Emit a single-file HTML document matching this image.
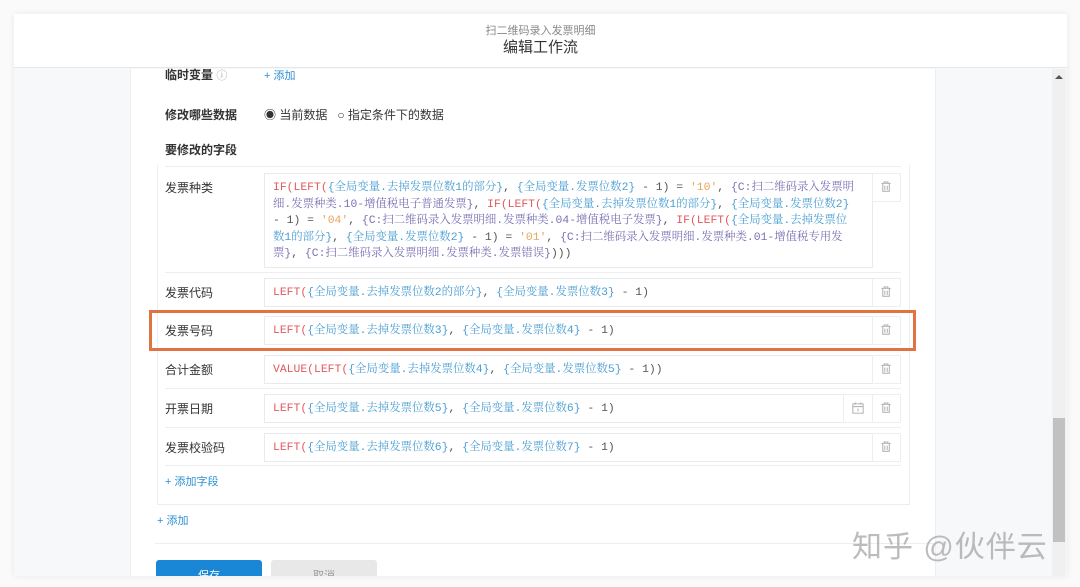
<!DOCTYPE html>
<html><head><meta charset="utf-8"><style>
*{margin:0;padding:0;box-sizing:border-box}
body{width:1080px;height:587px;background:#fafafa;overflow:hidden;position:relative;font-family:"Liberation Sans","Noto Sans CJK SC",sans-serif;color:#333}
.modal{position:absolute;left:14px;top:14px;width:1053px;height:562px;background:#f7f8fa;box-shadow:0 0 6px rgba(0,0,0,.08);overflow:hidden}
.hdr{position:absolute;left:0;top:0;width:1053px;height:54px;background:#fff;border-bottom:1px solid #e4e6ea;text-align:center}
.hdr .s{font-size:11px;color:#888;margin-top:10px;line-height:14px}
.hdr .t{font-size:15px;color:#333;margin-top:0px;line-height:20px}
.main{position:absolute;left:116px;top:55px;width:806px;height:520px;background:#fff;border-left:1px solid #eceef2;border-right:1px solid #eceef2}
.sb{position:absolute;left:1038px;top:55px;width:14px;height:510px;background:#f0f0f0}
.sb .th{position:absolute;left:1px;top:349px;width:12px;height:124px;background:#c1c1c1}
.sb .ar{position:absolute;left:3px;top:6px;width:0;height:0;border-left:4px solid transparent;border-right:4px solid transparent;border-bottom:4px solid #555}
.a{position:absolute;font-size:12px}
.b{font-weight:bold;color:#333}
.blue{color:#2d8fd6}
.card{position:absolute;left:157px;top:165px;width:753px;height:340px;border:1px solid #eceef2;border-top:none}
.row{position:absolute;left:165px;width:736px;border-top:1px solid #eceef2}
.lab{position:absolute;left:0;font-size:12px;color:#333}
.inp{position:absolute;left:99px;border:1px solid #e8eaee;background:#fff;font-family:"Liberation Mono","Noto Serif CJK SC",monospace;font-size:11.4px;line-height:16.6px;padding:6px 8px;color:#555;white-space:pre;overflow:hidden}
.tr{position:absolute;right:0;width:29px;height:29px;border:1px solid #eceef2;background:#fff}
.f{color:#e05a5f}.v{color:#4c9fd3}.c{color:#7b72b4}.s{color:#e9a55c}
</style></head><body>
<div class="modal">
 <div class="hdr"><div class="s">扫二维码录入发票明细</div><div class="t">编辑工作流</div></div>
 <div class="main"></div>
 <div class="sb"><div class="ar"></div><div class="th"></div></div>
</div>
<svg width="0" height="0" style="position:absolute"><defs><g id="tr"><path d="M9 10h10M12 10v-1.5h4V10M10.5 10.5v8h7v-8M12.7 12.5v4.5M15.3 12.5v4.5" fill="none" stroke="#aaa" stroke-width="1"/></g></defs></svg>
<div class="a b" style="left:165px;top:66px">临时变量 <span style="font-weight:normal;color:#aaa;font-size:11px">ⓘ</span></div>
<div class="a blue" style="left:264px;top:67px;font-size:11px">+ 添加</div>
<div class="a b" style="left:165px;top:106px">修改哪些数据</div>
<div class="a" style="left:264px;top:106px;font-size:12px">◉ 当前数据 &nbsp; ○ 指定条件下的数据</div>
<div class="a b" style="left:165px;top:141px">要修改的字段</div>
<div class="card"></div>

<div class="row" style="top:166px;height:106px"><div class="lab" style="top:12px">发票种类</div>
<div class="inp" style="top:6px;width:609px;height:95px"><span class="f">IF(LEFT(</span><span class="v">{全局变量.去掉发票位数1的部分}</span>, <span class="v">{全局变量.发票位数2}</span> - 1) = <span class="s">'10'</span>, <span class="c">{C:扫二维码录入发票明</span>
<span class="c">细.发票种类.10-增值税电子普通发票}</span>, <span class="f">IF(LEFT(</span><span class="v">{全局变量.去掉发票位数1的部分}</span>, <span class="v">{全局变量.发票位数2}</span>
- 1) = <span class="s">'04'</span>, <span class="c">{C:扫二维码录入发票明细.发票种类.04-增值税电子发票}</span>, <span class="f">IF(LEFT(</span><span class="v">{全局变量.去掉发票位</span>
<span class="v">数1的部分}</span>, <span class="v">{全局变量.发票位数2}</span> - 1) = <span class="s">'01'</span>, <span class="c">{C:扫二维码录入发票明细.发票种类.01-增值税专用发</span>
<span class="c">票}</span>, <span class="c">{C:扫二维码录入发票明细.发票种类.发票错误}</span>)))</div>
<svg class="tr" style="top:6px" viewBox="0 0 29 29"><use href="#tr"/></svg></div>

<div class="row" style="top:272px;height:38px"><div class="lab" style="top:11px">发票代码</div>
<div class="inp" style="top:5px;width:609px;height:29px"><span class="f">LEFT(</span><span class="v">{全局变量.去掉发票位数2的部分}</span>, <span class="v">{全局变量.发票位数3}</span> - 1)</div>
<svg class="tr" style="top:5px" viewBox="0 0 29 29"><use href="#tr"/></svg></div>

<div class="row" style="top:310px;height:39px"><div class="lab" style="top:11px">发票号码</div>
<div class="inp" style="top:5px;width:609px;height:29px"><span class="f">LEFT(</span><span class="v">{全局变量.去掉发票位数3}</span>, <span class="v">{全局变量.发票位数4}</span> - 1)</div>
<svg class="tr" style="top:5px" viewBox="0 0 29 29"><use href="#tr"/></svg></div>

<div class="row" style="top:349px;height:39px"><div class="lab" style="top:11px">合计金额</div>
<div class="inp" style="top:5px;width:609px;height:29px"><span class="f">VALUE(LEFT(</span><span class="v">{全局变量.去掉发票位数4}</span>, <span class="v">{全局变量.发票位数5}</span> - 1))</div>
<svg class="tr" style="top:5px" viewBox="0 0 29 29"><use href="#tr"/></svg></div>

<div class="row" style="top:388px;height:39px"><div class="lab" style="top:11px">开票日期</div>
<div class="inp" style="top:5px;width:580px;height:29px"><span class="f">LEFT(</span><span class="v">{全局变量.去掉发票位数5}</span>, <span class="v">{全局变量.发票位数6}</span> - 1)</div>
<svg style="position:absolute;left:678px;top:5px;width:30px;height:29px;border:1px solid #eceef2;background:#fff" viewBox="0 0 30 29"><path d="M9.5 9.5h11v10h-11zM9.5 12.5h11M12 8v2.5M18 8v2.5M15 14.5v3" fill="none" stroke="#aaa"/></svg>
<svg class="tr" style="top:5px" viewBox="0 0 29 29"><use href="#tr"/></svg></div>

<div class="row" style="top:427px;height:39px;border-bottom:1px solid #eceef2"><div class="lab" style="top:11px">发票校验码</div>
<div class="inp" style="top:5px;width:609px;height:29px"><span class="f">LEFT(</span><span class="v">{全局变量.去掉发票位数6}</span>, <span class="v">{全局变量.发票位数7}</span> - 1)</div>
<svg class="tr" style="top:5px" viewBox="0 0 29 29"><use href="#tr"/></svg></div>

<div class="a blue" style="left:165px;top:473px;font-size:11px">+ 添加字段</div>
<div class="a blue" style="left:157px;top:512px;font-size:11px">+ 添加</div>
<div style="position:absolute;left:155px;top:543px;width:780px;border-top:1px solid #eceef2"></div>
<div style="position:absolute;left:156px;top:560px;width:106px;height:16px;background:#1a87d6;border-radius:3px 3px 0 0;color:#fff;font-size:11px;text-align:center;padding-top:7px;overflow:hidden">保存</div>
<div style="position:absolute;left:271px;top:560px;width:106px;height:16px;background:#e8e8e8;border-radius:3px 3px 0 0;color:#999;font-size:11px;text-align:center;padding-top:7px;overflow:hidden">取消</div>
<div style="position:absolute;left:149px;top:310px;width:767px;height:41px;border:3px solid #e0733f"></div>
<div style="position:absolute;left:852px;top:522px;font-size:30px;color:rgba(160,160,160,.7);letter-spacing:1px;white-space:nowrap">知乎 @伙伴云</div>
</body></html>
